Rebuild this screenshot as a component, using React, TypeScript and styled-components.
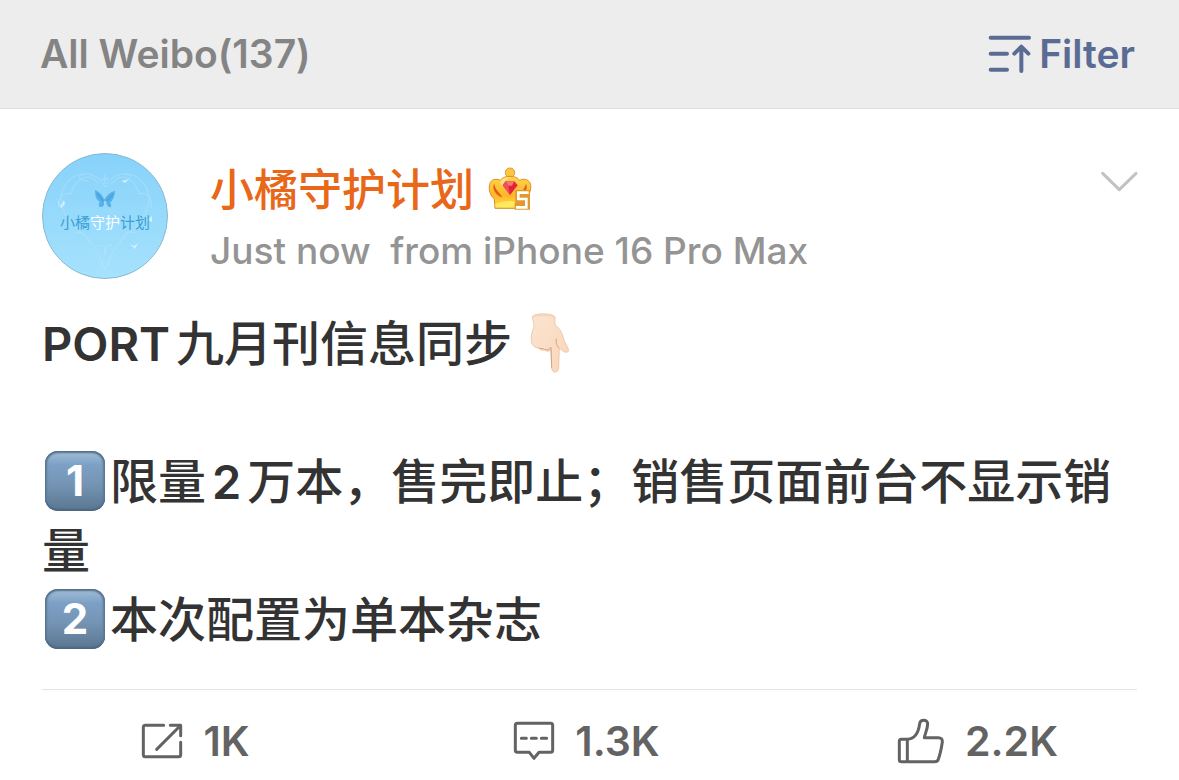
import React from "react";
import styled, { createGlobalStyle } from "styled-components";

const GlobalStyle = createGlobalStyle`
  *, *::before, *::after { box-sizing: border-box; }
  body {
    margin: 0;
    background: #fff;
    font-family: Inter, "Noto Sans CJK SC", sans-serif;
    font-weight: 600;
  }
  h1, h2, p { margin: 0; font: inherit; }
  button {
    padding: 0;
    border: 0;
    background: none;
    color: inherit;
    font: inherit;
    cursor: pointer;
  }
  svg { display: block; flex: none; }
`;

const TopBar = styled.header`
  display: flex;
  align-items: center;
  justify-content: space-between;
  height: 109px;
  padding: 0 44px 0 40px;
  background: #ededed;
  border-bottom: 1px solid #dedede;
  color: #848484;
  font-size: 39px;
  line-height: 48px;
`;

const FilterButton = styled.button`
  && {
    display: flex;
    align-items: center;
    gap: 7px;
    color: #5a6b94;
  }
`;

const Post = styled.article`
  padding: 44px 42px 35px;
`;

const PostHeader = styled.div`
  display: flex;
  align-items: flex-start;
  margin-bottom: 30px;
`;

const Author = styled.div`
  flex: 1;
  min-width: 0;
  margin-left: 42px;
`;

const NameRow = styled.div`
  display: flex;
  align-items: center;
  gap: 14px;
  height: 74px;
`;

const Name = styled.a`
  color: #e86718;
  font-size: 44px;
  font-weight: 500;
  line-height: 60px;
  text-decoration: none;
`;

const Meta = styled.p`
  && {
    color: #949494;
    font-size: 37px;
    font-weight: 500;
    line-height: 48px;
    white-space: pre-wrap;
  }
`;

const MoreButton = styled.button`
  && {
    margin-top: 17px;
  }
`;

const Body = styled.div`
  color: #333;
  font-size: 48px;
  font-weight: 500;
  line-height: 69px;
  text-autospace: normal;
`;

const Line = styled.p`
  && {
    min-height: 69px;
  }
`;

const Latin = styled.span`
  font-size: 47px;
  font-weight: 600;
  line-height: 60px;
`;

const Keycap = styled.span`
  display: inline-flex;
  align-items: center;
  justify-content: center;
  width: 60px;
  height: 60px;
  margin: 4px 5px 0 3px;
  border-radius: 13px;
  background: linear-gradient(#a3bfd9, #7c9fc4 24%, #7595b5 55%, #597690);
  box-shadow: inset 0 2px 2px #577087, inset 0 -2px 2px #4d6780, inset 2px 0 2px #607f9e, inset -2px 0 2px #607f9e;
  color: #fff;
  font-size: 42px;
  font-weight: 700;
  line-height: 60px;
  vertical-align: top;
`;

const HandIcon = styled.svg`
  && {
    display: inline-block;
    margin: 4px 0 0 12px;
    vertical-align: top;
  }
`;

const Divider = styled.hr`
  height: 1px;
  margin: 0 42px;
  border: 0;
  background: #e4e4e4;
`;

const Actions = styled.footer`
  display: grid;
  grid-template-columns: repeat(3, 1fr);
  padding: 26px 6px 14px 0;
`;

const Action = styled.button`
  && {
    display: flex;
    align-items: center;
    justify-content: center;
    gap: 20px;
    height: 50px;
    color: #636363;
    font-size: 41px;
    line-height: 50px;
  }
`;

const Stroke = styled.svg.attrs({ fill: "none", stroke: "currentColor", strokeLinecap: "round", strokeLinejoin: "round" })``;

function Avatar() {
  return (
    <svg width="126" height="126" viewBox="0 0 126 126" role="img" aria-label="小橘守护计划">
      <defs>
        <linearGradient id="sky" x1="0" y1="0" x2="0" y2="1">
          <stop offset="0" stopColor="#87d2fa" />
          <stop offset="1" stopColor="#a6e2fd" />
        </linearGradient>
      </defs>
      <circle cx="63" cy="63" r="62.5" fill="url(#sky)" stroke="#86b9d5" />
      <g fill="none" stroke="#b9e6fb" strokeWidth="1" opacity=".6">
        <path d="M63 34C55 18 35 16 24 31C13 47 22 62 33 74C46 87 54 91 61 113" />
        <path d="M63 34C71 18 91 16 102 31C113 47 104 62 93 74C80 87 72 91 65 113" />
        <path d="M57 31C45 16 32 28 29 41C20 38 15 47 17 55M69 31C81 16 94 28 97 41C106 38 111 47 109 55" />
        <path d="M46 27c-8 4-12-7-4-5M80 27c8 4 12-7 4-5M33 80c8-4 14 5 15 11M93 80c-8-4-14 5-15 11" />
        <path d="M56 93c5-3 10 4 6 9M70 93c-5-3-10 4-6 9M63 21v10M59 26h8M58 105l5 12 5-12" />
      </g>
      <g fill="#d4f0fc">
        <path d="M15 46l4 7 3-6 1 4-4 4zM80 28l7-2-4 4zM88 91l4 2 4-3-3 6zM105 67l5-4v6z" />
      </g>
      <path d="M62 46C60 41 56 38 53 37C53 42 54 47 58 49C55 52 58 57 62 52V48L64 48L65 52C68 57 71 53 68 50C71 47 73 42 73 38C68 39 65 42 63 46Z" fill="#55b1e7" />
      <path d="M55 40L61 48M71 41L65 48" fill="none" stroke="#3a97d6" strokeWidth="1" />
      <text x="63" y="75" textAnchor="middle" fill="#3a9fd5" fontFamily="Noto Sans CJK SC, sans-serif" fontSize="15" fontWeight="400">
        小橘<tspan fill="#fff">守护</tspan>计划
      </text>
    </svg>
  );
}

function Crown() {
  return (
    <svg width="44" height="44" viewBox="864 49 132 132" overflow="visible" role="img" aria-label="Level 5">
      <defs>
        <linearGradient id="gold" x1="0" y1="0" x2="0" y2="1">
          <stop offset="0" stopColor="#ffd44b" />
          <stop offset=".6" stopColor="#ffb629" />
          <stop offset="1" stopColor="#ffe04f" />
        </linearGradient>
      </defs>
      <circle cx="930" cy="63" r="14" fill="#ffc640" stroke="#dc9634" strokeWidth="3" />
      <path d="M885 170L883 142C870 132 865 113 869 98C873 82 888 80 901 86C908 77 918 74 930 74C942 74 952 77 959 86C974 78 989 85 992 99C994 116 987 132 977 142V170Z" fill="url(#gold)" stroke="#d98f28" strokeWidth="3" strokeLinejoin="round" />
      <path d="M882 96C875 112 888 132 907 137C900 122 888 119 882 96ZM978 96C985 112 975 122 958 132C964 119 973 114 978 96Z" fill="#e15c0d" />
      <path d="M900 91C908 78 919 77 930 77C919 83 911 91 907 107Z" fill="#ffe27a" />
      <path d="M886 158Q920 144 944 150V166H887Z" fill="#ffe95e" />
      <path d="M908 101L917 89H943L953 101L930 130Z" fill="#e4223d" />
      <path d="M908 101L917 89L925 104L930 130Z" fill="#f0505a" />
      <path d="M917 89H943L936 102H925Z" fill="#f7766f" />
      <path d="M946 115H990V174H944V154H946Z" fill="#e39a2c" />
      <path d="M986 123H955V142H979V167H948" fill="none" stroke="#fff" strokeWidth="8" />
    </svg>
  );
}

function PointingDown() {
  return (
    <HandIcon width="60" height="60" viewBox="66 68 180 180" role="img" aria-label="Pointing down">
      <defs>
        <linearGradient id="skin" x1="0" y1="0" x2="1" y2="1">
          <stop offset="0" stopColor="#fce5d0" />
          <stop offset="1" stopColor="#f8d5ba" />
        </linearGradient>
      </defs>
      <path
        d="M91 79C94 68 153 67 159 80C160 91 157 98 161 106C176 115 181 131 187 151C193 164 202 177 199 183C194 190 182 183 172 174L170 234C169 249 150 249 149 234L147 178C143 184 132 184 128 178C119 182 113 178 110 173C98 173 88 163 88 151C86 136 91 122 95 112C98 99 92 91 91 79Z"
        fill="url(#skin)" stroke="#e5b796" strokeWidth="2"
      />
      <path d="M93 81C106 73 145 73 157 81" fill="none" stroke="#f3d3b8" strokeWidth="3" />
      <path d="M110 173C118 176 124 173 128 178C136 180 142 177 147 171L149 232M163 145C160 157 166 170 172 174" fill="none" stroke="#d7a27e" strokeWidth="3" />
    </HandIcon>
  );
}

export default function App() {
  return (
    <>
      <GlobalStyle />
      <TopBar>
        <h1>All Weibo(137)</h1>
        <FilterButton type="button">
          <Stroke width="44" height="42" viewBox="83 73 132 126" strokeWidth="12" aria-hidden="true">
            <path d="M91 87H206M91 135H140M91 183H140M183 187V115M162 135L183 114L204 135" />
          </Stroke>
          Filter
        </FilterButton>
      </TopBar>
      <main>
        <Post>
          <PostHeader>
            <Avatar />
            <Author>
              <NameRow>
                <Name href="#profile">小橘守护计划</Name>
                <Crown />
              </NameRow>
              <Meta>{"Just now  from iPhone 16 Pro Max"}</Meta>
            </Author>
            <MoreButton type="button" aria-label="More options">
              <Stroke width="38" height="22" viewBox="419 480 114 66" overflow="visible" strokeWidth="9" color="#c2c2c2" aria-hidden="true">
                <path d="M430 490L480 539L530 490" />
              </Stroke>
            </MoreButton>
          </PostHeader>
          <Body>
            <Line><Latin>PORT</Latin>九月刊信息同步<PointingDown /></Line>
            <Line />
            <Line><Keycap>1</Keycap>限量<Latin>2</Latin>万本，售完即止；销售页面前台不显示销量</Line>
            <Line><Keycap>2</Keycap>本次配置为单本杂志</Line>
          </Body>
        </Post>
        <Divider />
        <Actions>
          <Action type="button" aria-label="Repost 1K">
            <Stroke width="42" height="36" viewBox="63 129 126 108" strokeWidth="9" aria-hidden="true">
              <path d="M131 136H76Q70 136 70 142V224Q70 230 76 230H176Q182 230 182 224V187M151 136H182V167M180 138L110 208" />
            </Stroke>
            1K
          </Action>
          <Action type="button" aria-label="Comment 1.3K">
            <Stroke width="42" height="40" viewBox="39 66 126 120" strokeWidth="9" aria-hidden="true">
              <path d="M52 73H152Q158 73 158 79V154Q158 160 152 160H117L102 178L88 160H52Q46 160 46 154V79Q46 73 52 73ZM64 118H79M94 118H109M124 118H140" />
            </Stroke>
            1.3K
          </Action>
          <Action type="button" aria-label="Like 2.2K">
            <Stroke width="48" height="46" viewBox="60 111 144 138" strokeWidth="9" aria-hidden="true">
              <path d="M91 175H73Q67 175 67 181V236Q67 242 73 242H174Q181 242 184 235Q191 216 196 183Q197 170 184 170H142C145 155 152 142 152 128C152 115 130 113 128 128C125 151 117 174 91 175V241" />
            </Stroke>
            2.2K
          </Action>
        </Actions>
      </main>
    </>
  );
}
